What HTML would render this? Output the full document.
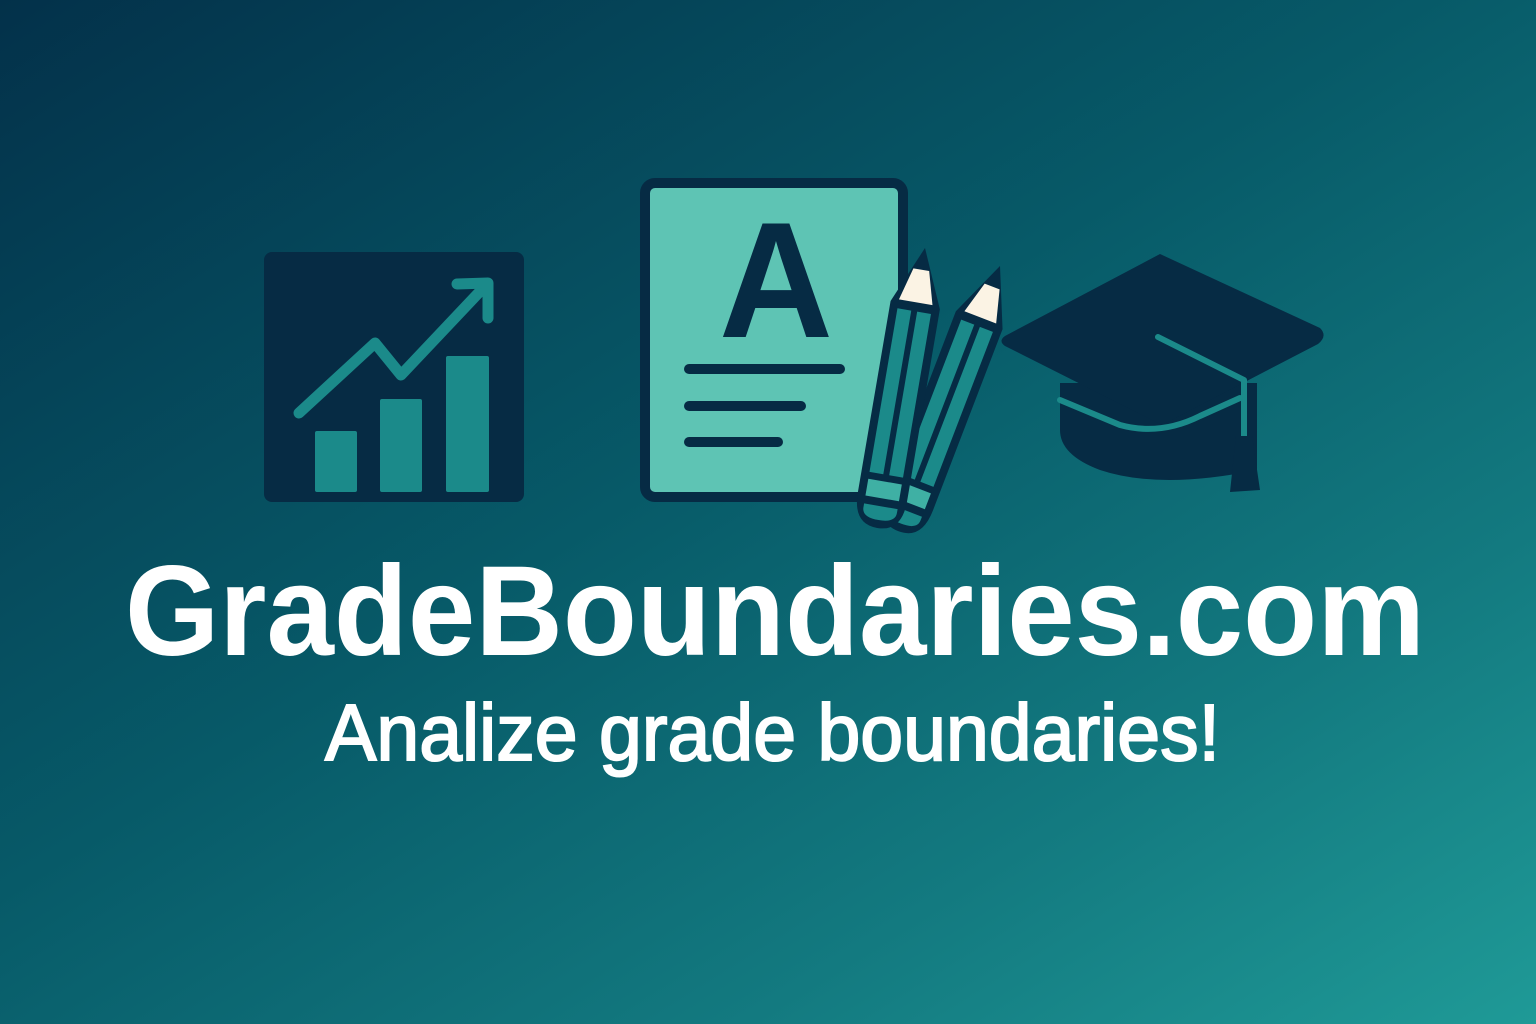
<!DOCTYPE html>
<html><head><meta charset="utf-8"><style>
html,body{margin:0;padding:0;width:1536px;height:1024px;overflow:hidden}
body{background:linear-gradient(148deg,#03314a 0%,#075a68 45%,#137a80 75%,#1f9a97 100%)}
svg{position:absolute;left:0;top:0}
</style></head><body>
<svg width="1536" height="1024" viewBox="0 0 1536 1024">
<rect x="264" y="252" width="260" height="250" rx="8" fill="#062b44"/>
<rect x="315" y="431" width="42" height="61" rx="2" fill="#1b8a8a"/>
<rect x="380" y="399" width="42" height="93" rx="2" fill="#1b8a8a"/>
<rect x="446" y="356" width="43" height="136" rx="2" fill="#1b8a8a"/>
<polyline points="299,413 375,343 401,375 487,284" fill="none" stroke="#1b8a8a" stroke-width="11" stroke-linecap="round" stroke-linejoin="round"/>
<polyline points="457,284 488,283 488,318" fill="none" stroke="#1b8a8a" stroke-width="11" stroke-linecap="round" stroke-linejoin="round"/>
<rect x="645" y="183" width="258" height="314" rx="10" fill="#5ec4b4" stroke="#062b44" stroke-width="10"/>
<text x="776" y="337" text-anchor="middle" font-family="Liberation Sans,sans-serif" font-weight="bold" font-size="165" fill="#062b44" textLength="114" lengthAdjust="spacingAndGlyphs">A</text>
<g stroke="#062b44" stroke-width="10" stroke-linecap="round">
<line x1="689" y1="369" x2="840" y2="369"/>
<line x1="689" y1="406" x2="801" y2="406"/>
<line x1="689" y1="442" x2="778" y2="442"/>
</g>
<defs>
<g id="pen">
<path d="M0,0 L25,58 L25,252 Q25,284 0,284 Q-25,284 -25,252 L-25,58 Z" fill="#062b44"/>
<path d="M-8,22 L8,22 L17,55 L-17,55 Z" fill="#fbf3e4"/>
<rect x="-17" y="64" width="14" height="166" fill="#1b8a8a"/>
<rect x="3" y="64" width="14" height="166" fill="#1b8a8a"/>
<rect x="-17" y="237" width="34" height="17" fill="#3fb0a4"/>
<path d="M-17,262 L17,262 L17,266 Q17,276 0,276 Q-17,276 -17,266Z" fill="#1b8a8a"/>
</g>
</defs>
<g transform="translate(1000,266) rotate(21)"><use href="#pen"/></g>
<g transform="translate(925,248) rotate(9.7)"><use href="#pen"/></g>
<path d="M1060,383 L1257,383 L1257,470 Q1160,490 1100,470 Q1060,455 1060,430 Z" fill="#062b44"/>
<path d="M1005,336 L1160,254 L1320,328 Q1328,336 1318,344 L1162,425 L1005,346 Q998,341 1005,336Z" fill="#062b44"/>
<polyline points="1158,337 1244,380 1244,436" fill="none" stroke="#1b8a8a" stroke-width="6" stroke-linecap="round" stroke-linejoin="round"/>
<path d="M1060,400 L1120,425 Q1160,436 1200,416 L1240,398" fill="none" stroke="#1b8a8a" stroke-width="6" stroke-linecap="round"/>
<path d="M1236,436 L1252,436 L1260,490 L1230,492Z" fill="#062b44"/>
<text x="125" y="655" font-family="Liberation Sans,sans-serif" font-weight="bold" font-size="128" fill="#fff" textLength="1300" lengthAdjust="spacingAndGlyphs">GradeBoundaries.com</text>
<text x="325" y="760" font-family="Liberation Sans,sans-serif" font-size="80" fill="#fff" stroke="#fff" stroke-width="2" textLength="895" lengthAdjust="spacingAndGlyphs">Analize grade boundaries!</text>
</svg>
</body></html>
